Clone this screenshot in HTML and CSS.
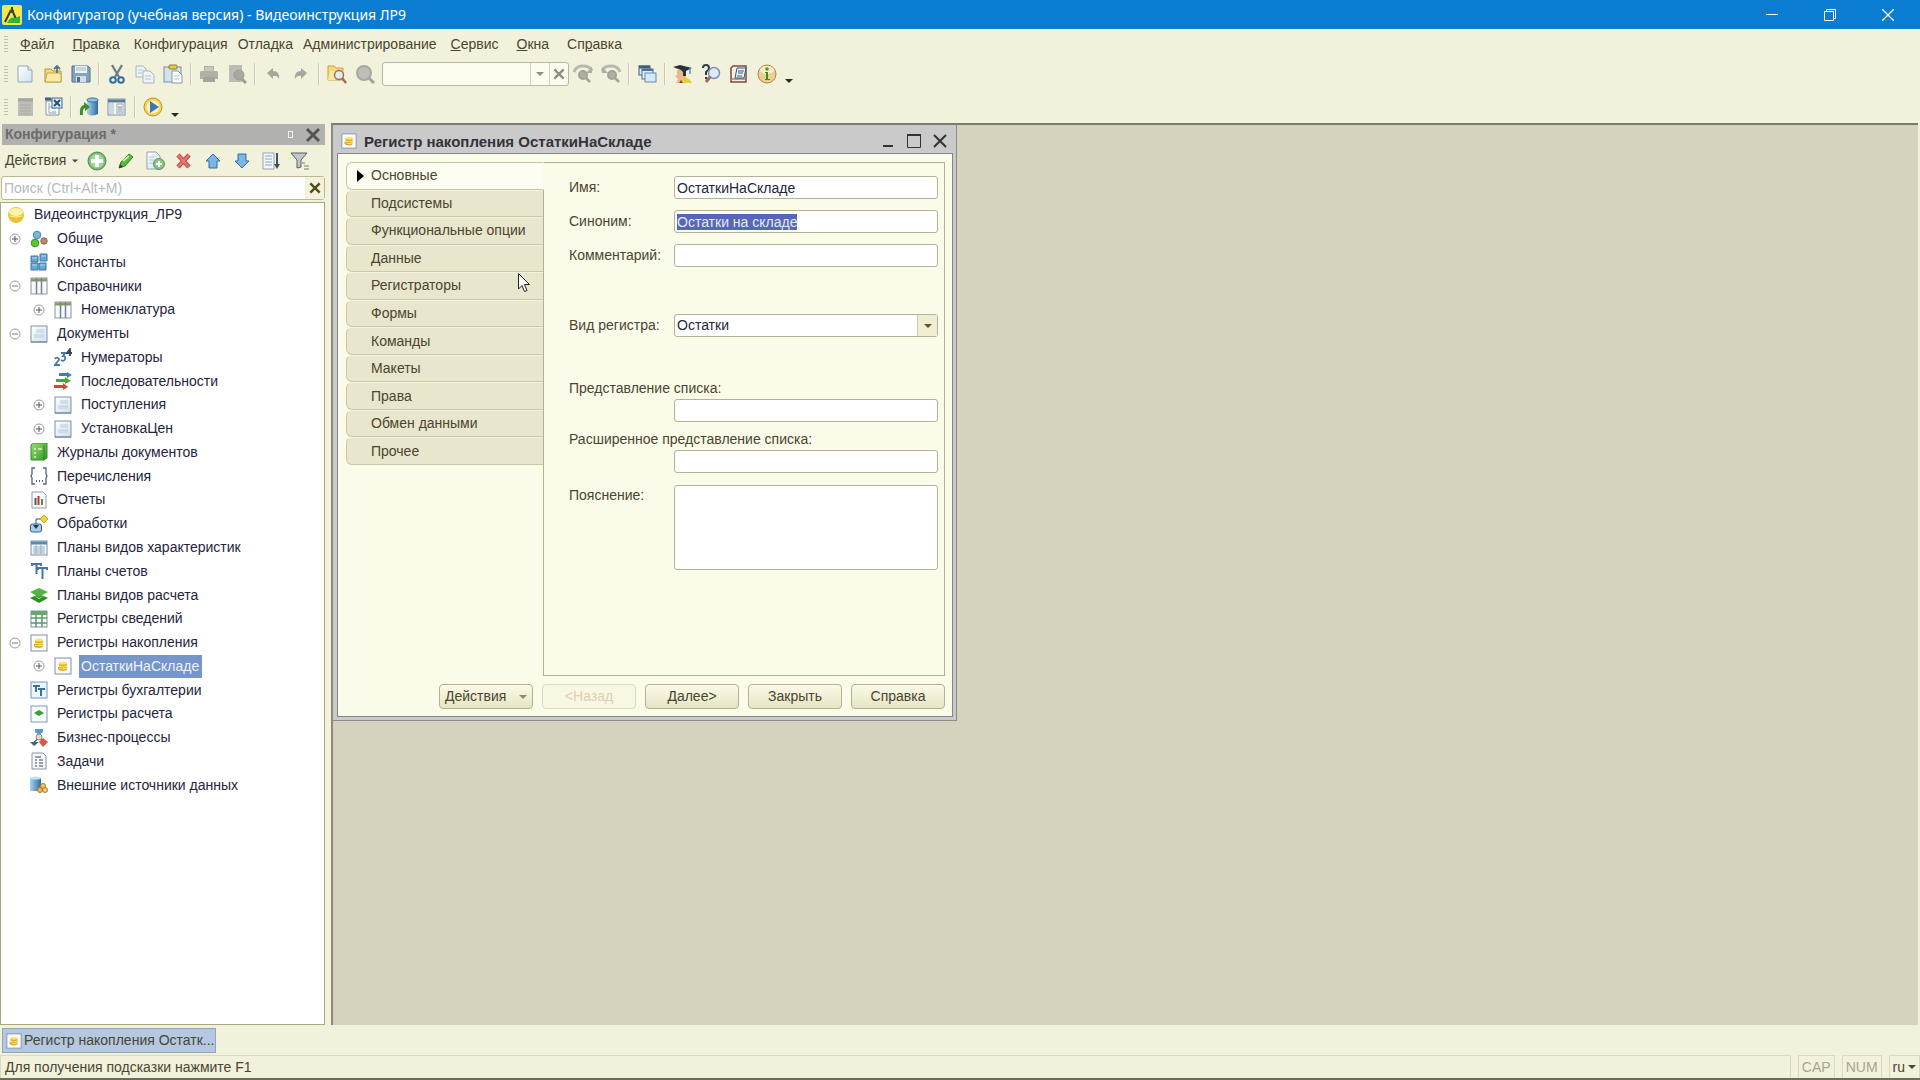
FILE: index.html
```html
<!DOCTYPE html>
<html lang="ru">
<head>
<meta charset="utf-8">
<title>Конфигуратор (учебная версия) - Видеоинструкция ЛР9</title>
<link rel="stylesheet" href="styles.css">
</head>
<body>
<svg class="sprite" aria-hidden="true">
  <defs>
    <linearGradient id="gold" x1="0" y1="0" x2="0" y2="1"><stop offset="0" stop-color="#fff2a0"/><stop offset="1" stop-color="#d9a818"/></linearGradient>
    <linearGradient id="paper" x1="0" y1="0" x2="1" y2="1"><stop offset="0" stop-color="#ffffff"/><stop offset="1" stop-color="#cfe0ee"/></linearGradient>
    <linearGradient id="blue" x1="0" y1="0" x2="1" y2="0"><stop offset="0" stop-color="#a9d3ee"/><stop offset="1" stop-color="#2f6ca3"/></linearGradient>
    <linearGradient id="green" x1="0" y1="0" x2="1" y2="1"><stop offset="0" stop-color="#9be06e"/><stop offset="1" stop-color="#2f9a2c"/></linearGradient>
  </defs>
  <symbol id="i-app" viewBox="0 0 20 20"><rect x="0" y="0" width="20" height="20" rx="2" fill="#f1e84f"/><path d="M10 2v4M9 5L3 17M10 5l4 9" stroke="#3d3b20" stroke-width="2" fill="none"/><circle cx="10" cy="6" r="2" fill="#4a4830"/><path d="M5 18q4-7 8-5l5-2v7z" fill="#2fb53a"/></symbol>
  <symbol id="i-new" viewBox="0 0 20 20"><path d="M3 2h10l4 4v12H3z" fill="url(#paper)" stroke="#93a5b8"/><path d="M13 2v4h4" fill="#e8f0f6" stroke="#93a5b8"/></symbol>
  <symbol id="i-open" viewBox="0 0 20 20"><path d="M2 5h6l2 2h8v11H2z" fill="#f3d97c" stroke="#b8953a"/><path d="M2 18l2-9h14v9z" fill="#faeaa6" stroke="#c8a64c"/><path d="M14 9V3m-3 2l3-3 3 3" fill="none" stroke="#5b7286" stroke-width="1.800"/></symbol>
  <symbol id="i-save" viewBox="0 0 20 20"><path d="M1 2h16l2 2v14H1z" fill="#86a2bd" stroke="#4f6e8c"/><rect x="4" y="2" width="12" height="7" fill="#e9f2f8"/><path d="M5 4h10M5 6h10" stroke="#9fb6c9"/><rect x="5" y="12" width="10" height="6" fill="#d3dde5"/><rect x="6" y="13" width="3" height="5" fill="#4f6e8c"/></symbol>
  <symbol id="i-cut" viewBox="0 0 20 20"><path d="M5 1l7 12M15 1L8 13" stroke="#6c7f90" stroke-width="2.400"/><circle cx="6" cy="16" r="2.800" fill="none" stroke="#2f6da0" stroke-width="2"/><circle cx="14" cy="16" r="2.800" fill="none" stroke="#2f6da0" stroke-width="2"/></symbol>
  <symbol id="i-copy" viewBox="0 0 20 20"><path d="M1 2h7l3 3v8H1z" fill="#eef3f6" stroke="#a5b7c6"/><path d="M8 7h7l4 4v8H8z" fill="#eef3f6" stroke="#a5b7c6"/><path d="M3 6h5M3 9h4M10 12h6M10 15h6" stroke="#b4c4d2"/></symbol>
  <symbol id="i-paste" viewBox="0 0 20 20"><rect x="1" y="3" width="17" height="15" fill="#d7e1e8" stroke="#7890a5"/><rect x="6" y="1" width="8" height="4" rx="1" fill="#e8c94e" stroke="#937b26"/><path d="M9 7h6l4 4v8H9z" fill="#fff" stroke="#8199ad"/><path d="M11 12h5M11 15h5" stroke="#b5c4d0"/></symbol>
  <symbol id="i-print" viewBox="0 0 20 20"><path d="M5 2h10v5h3q1 1 1 2v6H1V9q0-2 1-2h3z" fill="#b1b0a6"/><path d="M6 3h8v4H6z" fill="#c9c8bd"/><path d="M4 13h12v5H4z" fill="#a5a49b"/></symbol>
  <symbol id="i-preview" viewBox="0 0 20 20"><path d="M2 1h13v17H2z" fill="#bdbcb2"/><circle cx="12" cy="11" r="5" fill="#aaa99f" stroke="#9d9c92"/><path d="M15 15l4 4" stroke="#9d9c92" stroke-width="3"/></symbol>
  <symbol id="i-undo" viewBox="0 0 20 20"><path d="M4 9l6-5v3q7 0 6 8-2-4-6-3v3z" fill="#a5a79c"/></symbol>
  <symbol id="i-redo" viewBox="0 0 20 20"><path d="M16 9l-6-5v3q-7 0-6 8 2-4 6-3v3z" fill="#a5a79c"/></symbol>
  <symbol id="i-find" viewBox="0 0 20 20"><path d="M1 2h6l2 2h7v12H1z" fill="#f4d977" stroke="#c6a349"/><path d="M1 16L3 7h14v9z" fill="#f9e8a2"/><circle cx="12" cy="11" r="4.500" fill="#e3edf3" stroke="#a46e52" stroke-width="1.500"/><path d="M15 14l4 5" stroke="#a46e52" stroke-width="2.500"/></symbol>
  <symbol id="i-lens" viewBox="0 0 20 20"><circle cx="9" cy="9" r="7" fill="#c0bfb6" stroke="#a9a89f" stroke-width="2"/><path d="M14 14l5 5" stroke="#a3a298" stroke-width="3"/></symbol>
  <symbol id="i-lensup" viewBox="0 0 20 20"><path d="M1 8q2-6 9-6t9 5" fill="none" stroke="#bab9af" stroke-width="3"/><path d="M19 3v6h-6z" fill="#aeada3"/><circle cx="10" cy="11" r="4" fill="#b0afa5" stroke="#a3a299" stroke-width="2"/><path d="M13 14l4 4" stroke="#a3a299" stroke-width="2.500"/></symbol>
  <symbol id="i-lensdn" viewBox="0 0 20 20"><path d="M1 7q2-5 9-5t9 6" fill="none" stroke="#bab9af" stroke-width="3"/><path d="M1 3v6h6z" fill="#aeada3"/><circle cx="11" cy="11" r="4" fill="#b0afa5" stroke="#a3a299" stroke-width="2"/><path d="M14 14l4 4" stroke="#a3a299" stroke-width="2.500"/></symbol>
  <symbol id="i-windows" viewBox="0 0 20 20"><rect x="2" y="2" width="11" height="9" fill="#dceaf4" stroke="#3d5f7e"/><path d="M2 3h11" stroke="#3d5f7e" stroke-width="3"/><rect x="5" y="5" width="11" height="10" fill="#e3eef7" stroke="#4d7191"/><path d="M5 6h11" stroke="#4d7191" stroke-width="2"/><rect x="8" y="9" width="11" height="9" fill="#d7e8f7" stroke="#5f8db5"/></symbol>
  <symbol id="i-student" viewBox="0 0 20 20"><path d="M3 19l2-4-3-3 2-1V6h9v7l6 6z" fill="#e8b98c"/><path d="M11 13l-2 6h10l-3-4z" fill="#e0d32c"/><path d="M0 3l7-2 12 3-6 3v5h-3V8L8 6z" fill="#24323e"/><path d="M17 4v6" stroke="#4a90c2" stroke-width="1.500"/><path d="M8 16l2 3H6z" fill="#a53a26"/></symbol>
  <symbol id="i-qlens" viewBox="0 0 20 20"><path d="M2 4q0-3 3-3t3 3q0 2-3 4v3" fill="none" stroke="#2c3d4c" stroke-width="2"/><rect x="4" y="13" width="2" height="2" fill="#2c3d4c"/><circle cx="13" cy="9" r="5.500" fill="#dfe9fa" stroke="#8290ac" stroke-width="1.500"/><path d="M9 13l-4 5" stroke="#9b6a55" stroke-width="3"/></symbol>
  <symbol id="i-syntax" viewBox="0 0 20 20"><path d="M4 2h13v16H2V4z" fill="#f4efe7" stroke="#7c4c3e" stroke-width="1.500"/><path d="M3 15h13" stroke="#7c4c3e"/><path d="M8 4h9l-2 10H6z" fill="#e9f0f8" stroke="#3c5976"/><path d="M9 7h6M9 9h5M8 12h5" stroke="#3c5976"/></symbol>
  <symbol id="i-info" viewBox="0 0 20 20"><circle cx="10" cy="10" r="9" fill="#edcf93" stroke="#ad8644"/><ellipse cx="10" cy="6" rx="7" ry="4" fill="#f9edd0"/><circle cx="10" cy="5" r="1.800" fill="#549c24"/><path d="M8 8h3v7h2v1H8v-1h1V9H8z" fill="#3e8d17"/></symbol>
  <symbol id="i-conf" viewBox="0 0 20 20"><rect x="3" y="1" width="15" height="18" fill="#bfbfb8"/><path d="M3 3h15" stroke="#a6a69f" stroke-width="3"/><path d="M5 8h11M5 11h11M5 14h11M5 17h11" stroke="#aaaaa3"/></symbol>
  <symbol id="i-confx" viewBox="0 0 20 20"><path d="M2 2h7v2H3v14h13v-7" fill="#fbfbf5" stroke="#7f98ac"/><path d="M2 2h6" stroke="#3f5f7f" stroke-width="3"/><path d="M6 6v10h3M6 10h3" fill="none" stroke="#8fa4b6"/><rect x="9" y="9" width="4" height="3" fill="#b6c9d8"/><rect x="9" y="14" width="4" height="3" fill="#b6c9d8"/><rect x="9" y="1" width="10" height="10" fill="#dfeefa" stroke="#396c9c"/><path d="M11 3l6 6M17 3l-6 6" stroke="#2f4d68" stroke-width="2"/></symbol>
  <symbol id="i-db" viewBox="0 0 20 20"><path d="M8 3v14q5 3 11 0V3z" fill="url(#blue)"/><ellipse cx="13.500" cy="3" rx="5.500" ry="2" fill="#8cc1e4" stroke="#396f9c"/><path d="M1 18q-1-9 4-10V5l6 5-5 4v-3q-3 1-2 7z" fill="#398e2b"/></symbol>
  <symbol id="i-list" viewBox="0 0 20 20"><rect x="1" y="2" width="17" height="16" fill="#f3f5f6" stroke="#7f93a5"/><path d="M1 4h17" stroke="#5c7c98" stroke-width="3"/><rect x="2" y="6" width="5" height="11" fill="#cdd8e0"/><rect x="10" y="7" width="6" height="9" fill="#fff" stroke="#98a5b0"/><path d="M11 10h4M11 12h4M11 14h4" stroke="#7b8791"/></symbol>
  <symbol id="i-run" viewBox="0 0 20 20"><circle cx="10" cy="10" r="9" fill="#f7d352" stroke="#be932b"/><circle cx="10" cy="10" r="6.500" fill="#f9f0c8"/><path d="M7 4l9 6-9 6z" fill="#3c79ac"/></symbol>

  <symbol id="i-add" viewBox="0 0 20 20"><circle cx="10" cy="10" r="9" fill="#7cb779" stroke="#4e8f50"/><circle cx="10" cy="10" r="7" fill="#a6d5a0"/><path d="M10 4v12M4 10h12" stroke="#fff" stroke-width="3.500"/></symbol>
  <symbol id="i-pen" viewBox="0 0 20 20"><path d="M3 17l2-6 8-8 4 3-8 9z" fill="#56b93a" stroke="#2e8424"/><path d="M7 10l6-5" stroke="#c5efa5" stroke-width="2"/><path d="M3 17l1-4 3 3z" fill="#3d3d2d"/></symbol>
  <symbol id="i-adddoc" viewBox="0 0 20 20"><path d="M2 1h9l4 4v13H2z" fill="url(#paper)" stroke="#8da5b9"/><path d="M4 6h6M4 9h7M4 12h5" stroke="#b4c6d4"/><circle cx="14" cy="13" r="5.500" fill="#8cc486" stroke="#569858"/><path d="M14 10v6M11 13h6" stroke="#fff" stroke-width="2"/></symbol>
  <symbol id="i-del" viewBox="0 0 20 20"><path d="M4 4l11 12M15 4L4 16" stroke="#c24a48" stroke-width="4.500"/><path d="M4 4l11 12M15 4L4 16" stroke="#e8756c" stroke-width="2.500"/></symbol>
  <symbol id="i-up" viewBox="0 0 20 20"><path d="M10 3l7 7h-3v7H6v-7H3z" fill="#79b6e8" stroke="#356d9c"/></symbol>
  <symbol id="i-down" viewBox="0 0 20 20"><path d="M10 17l7-7h-3V3H6v7H3z" fill="#79b6e8" stroke="#356d9c"/></symbol>
  <symbol id="i-sort" viewBox="0 0 20 20"><rect x="2" y="2" width="11" height="16" fill="#f4f8fa" stroke="#90a6b8"/><path d="M4 5h7M4 8h7M4 11h7M4 14h7" stroke="#8ea5b8"/><path d="M16 2v13" stroke="#42505c" stroke-width="2"/><path d="M13 13h6l-3 5z" fill="#42505c"/></symbol>
  <symbol id="i-filter" viewBox="0 0 20 20"><path d="M1 2h16l-6 7v7l-4 1V9z" fill="#c2c6c8" stroke="#5a6064"/><path d="M12 12h3M14 15h5M14 18h5" stroke="#777c70"/></symbol>

  <symbol id="i-plus" viewBox="0 0 12 12"><circle cx="6" cy="6" r="5" fill="#fff" stroke="#9c9c9c"/><path d="M6 3v6M3 6h6" stroke="#555"/></symbol>
  <symbol id="i-minus" viewBox="0 0 12 12"><circle cx="6" cy="6" r="5" fill="#fff" stroke="#9c9c9c"/><path d="M3 6h6" stroke="#777"/></symbol>

  <symbol id="t-root" viewBox="0 0 18 18"><circle cx="9" cy="9" r="8" fill="#ebc435"/><ellipse cx="9" cy="6" rx="7" ry="4" fill="#fbf2a6"/><path d="M3 10q6 2 12 0" stroke="#fff5b0" fill="none"/></symbol>
  <symbol id="t-common" viewBox="0 0 18 18"><circle cx="7" cy="5" r="3.800" fill="#7fb5dc" stroke="#4d84ac"/><circle cx="5" cy="13" r="3.800" fill="#53c934" stroke="#379021"/><circle cx="14" cy="11" r="3.200" fill="#b98a70" stroke="#8b6450"/></symbol>
  <symbol id="t-const" viewBox="0 0 18 18"><path d="M1 3h7v6H1zM1 10h7v7H1zM9 10h7v7H9zM10 1h7v7h-7z" fill="#6aa5d0" stroke="#3b76a5"/><path d="M2 5h5M2 12h5M10 12h5M11 3h5" stroke="#b4dbf2"/></symbol>
  <symbol id="t-cat" viewBox="0 0 18 18"><rect x="1" y="1" width="16" height="16" fill="#f7f9fb" stroke="#8895a8"/><path d="M1 3h16" stroke="#8d9a62" stroke-width="3"/><path d="M6.500 1v16M11.500 1v16" stroke="#75839a" stroke-width="1.500"/></symbol>
  <symbol id="t-doc" viewBox="0 0 18 18"><rect x="1" y="1" width="16" height="16" fill="url(#paper)" stroke="#7c96ae"/><path d="M6 5h8M6 7h8M4 10h10M4 12h10" stroke="#bccbd8"/><path d="M1 17h16" stroke="#64809c"/></symbol>
  <symbol id="t-num" viewBox="0 0 18 18"><g fill="none" stroke="#4a779f" stroke-width="1.800"><path d="M1 11q1-2 3-1t0 3l-3 4h5"/><path d="M7 5h4l-2 3q3 0 2 3t-4 1"/><path d="M16 8V1l-3 4h5" stroke="#31465f"/></g></symbol>
  <symbol id="t-seq" viewBox="0 0 18 18"><path d="M5 1h8V0l5 3-5 3V4H5z" fill="#3f7fb0"/><path d="M2 7h9V5l6 4-6 3v-2H2z" fill="#48a930"/><path d="M0 13h9v-2l5 4-5 3v-2H0z" fill="#df432f"/></symbol>
  <symbol id="t-journal" viewBox="0 0 18 18"><path d="M1 2l3-2h13v15l-3 2H1z" fill="url(#green)" stroke="#348b2c"/><path d="M14 2v15" stroke="#2b7e25"/><path d="M4 6h2M4 10h2M4 14h2M8 6h4" stroke="#dff7c9" stroke-width="1.500"/></symbol>
  <symbol id="t-enum" viewBox="0 0 18 18"><path d="M5 1H2v6L1 9l1 2v6h3M13 1h3v6l1 2-1 2v6h-3" fill="none" stroke="#566371" stroke-width="1.300"/><path d="M6 14h1M9 14h1M12 14h1" stroke="#566371" stroke-width="2"/></symbol>
  <symbol id="t-report" viewBox="0 0 18 18"><path d="M2 1h11l3 3v13H2z" fill="#f8fafb" stroke="#8b9daf"/><path d="M5.500 7v7" stroke="#555d66" stroke-width="2"/><path d="M8.500 5v9" stroke="#cb3527" stroke-width="2"/><path d="M12 8v6" stroke="#51923c" stroke-width="2"/></symbol>
  <symbol id="t-proc" viewBox="0 0 18 18"><path d="M10 4l4-4 4 4-4 4z" fill="#f0d73c" stroke="#c3a51f"/><path d="M10 4H6v7" fill="none" stroke="#344e68"/><rect x="0.500" y="9" width="11" height="8" rx="2" fill="#a5cde9" stroke="#2d6291"/><path d="M3 10h6l-3 4z" fill="#26384b"/></symbol>
  <symbol id="t-char" viewBox="0 0 18 18"><rect x="1" y="2" width="16" height="14" fill="#f5f8fb" stroke="#7691aa"/><path d="M1 4h16" stroke="#5c89a8" stroke-width="3"/><path d="M3 8h12M3 10h12M3 12h12M3 14h12" stroke="#8fb2c6"/><path d="M6 6v9M11 6v9" stroke="#92aebf"/></symbol>
  <symbol id="t-acc" viewBox="0 0 18 18"><path d="M2 4V2h9v2M6.500 2v10M8 8V6h9v2M12.500 6v11" fill="none" stroke="#4478a5" stroke-width="2"/></symbol>
  <symbol id="t-calc" viewBox="0 0 18 18"><path d="M0 12l9-4 9 4-9 5z" fill="#2f8c29"/><path d="M0 6l9-4 9 4-9 5z" fill="#57b442"/><path d="M3 9l6 3 6-3-6 4z" fill="#d4efc4"/></symbol>
  <symbol id="t-info" viewBox="0 0 18 18"><rect x="1" y="1" width="16" height="16" fill="#fbfdfb" stroke="#7693a5"/><rect x="1" y="1" width="16" height="4" fill="#68a86e"/><path d="M6 5v12M12 5v12M1 8h16M1 13h16" stroke="#5f9474" stroke-width="1.500"/></symbol>
  <symbol id="t-accum" viewBox="0 0 18 18"><rect x="1" y="1" width="16" height="16" fill="#fcfcfa" stroke="#7e90b0"/><path d="M5 6v7q4 2 8 0V6z" fill="#e2b01f"/><path d="M4 10v2q3 2 5 1v-3z" fill="#d79f14"/><ellipse cx="9" cy="6" rx="4" ry="1.600" fill="#fbe66a"/><path d="M5 9q4 2 8 0M5 11q4 2 8 0" stroke="#fbe88a" fill="none"/></symbol>
  <symbol id="t-book" viewBox="0 0 18 18"><rect x="1" y="1" width="16" height="16" fill="#eef6fb" stroke="#6d9abd"/><path d="M3 5h7M6 4v7M8 8h7M11 8v7" fill="none" stroke="#3e7198" stroke-width="2"/></symbol>
  <symbol id="t-rcalc" viewBox="0 0 18 18"><rect x="1" y="1" width="16" height="16" fill="#f8fbfd" stroke="#7c9bb6"/><path d="M4 8l5-3 5 3-5 3z" fill="#3d9b33"/></symbol>
  <symbol id="t-bp" viewBox="0 0 18 18"><path d="M5 0h8v3l-4 3-4-3z" fill="#559ac8"/><path d="M9 6v4M4 13l5-4 5 4" fill="none" stroke="#5b6670" stroke-width="1.500"/><circle cx="9" cy="8" r="3" fill="#e9d9bc" stroke="#8a8b86"/><path d="M0 13h9l-5 4z" fill="#3a6877"/><path d="M9 13l4-4 5 4-5 5z" fill="#de5445"/></symbol>
  <symbol id="t-task" viewBox="0 0 18 18"><path d="M2 1h11l3 3v13H2z" fill="#f7f8f9" stroke="#8495a5"/><path d="M5 5h6M5 8h2M9 8h4M5 11h2M9 11h4M5 14h2M9 14h4" stroke="#76828e" stroke-width="1.500"/></symbol>
  <symbol id="t-ext" viewBox="0 0 18 18"><path d="M0 2h11v13H0z" fill="url(#blue)"/><ellipse cx="5.500" cy="2" rx="5.500" ry="1.500" fill="#c2e0f2"/><circle cx="13" cy="10" r="2.500" fill="#efc46a" stroke="#af7d22"/><circle cx="10" cy="14" r="2.500" fill="#efb64a" stroke="#af7d22"/><circle cx="15" cy="14" r="2.500" fill="#f3cd79" stroke="#af7d22"/></symbol>
  <symbol id="i-arrow" viewBox="0 0 8 4"><path d="M0 0h8L4 4z" fill="currentColor"/></symbol>
  <symbol id="i-x" viewBox="0 0 12 12"><path d="M2 2l8 8M10 2l-8 8" stroke="currentColor" stroke-width="2"/></symbol>
</svg>

<div class="app">
  <header class="titlebar">
    <svg class="ico20"><use href="#i-app"/></svg>
    <h1 class="titlebar-text">Конфигуратор (учебная версия) - Видеоинструкция ЛР9</h1>
    <button class="sysbtn" aria-label="Свернуть"><svg class="ico12" viewBox="0 0 12 12"><path d="M0 5.500h12" stroke="#fff"/></svg></button>
    <button class="sysbtn" aria-label="Восстановить"><svg class="ico12" viewBox="0 0 12 12"><path d="M.5 2.500h9v9h-9zM2.500 2.500v-2h9v9h-2" fill="none" stroke="#fff"/></svg></button>
    <button class="sysbtn" aria-label="Закрыть"><svg class="ico12" viewBox="0 0 12 12"><path d="M0 0l12 12M12 0L0 12" stroke="#fff" stroke-width="1.300"/></svg></button>
  </header>

  <nav class="menubar">
    <span class="grip"></span>
    <button class="menu"><u>Ф</u>айл</button>
    <button class="menu"><u>П</u>равка</button>
    <button class="menu tight">Конфигурация</button>
    <button class="menu tight">Отладка</button>
    <button class="menu tight">Администрирование</button>
    <button class="menu"><u>С</u>ервис</button>
    <button class="menu"><u>О</u>кна</button>
    <button class="menu">Сп<u>р</u>авка</button>
  </nav>

  <div class="toolbar">
    <span class="grip"></span>
    <button class="tool" aria-label="Создать"><svg class="ico20"><use href="#i-new"/></svg></button>
    <button class="tool" aria-label="Открыть"><svg class="ico20"><use href="#i-open"/></svg></button>
    <button class="tool" aria-label="Сохранить"><svg class="ico20"><use href="#i-save"/></svg></button>
    <span class="sep"></span>
    <button class="tool" aria-label="Вырезать"><svg class="ico20"><use href="#i-cut"/></svg></button>
    <button class="tool" aria-label="Копировать"><svg class="ico20"><use href="#i-copy"/></svg></button>
    <button class="tool" aria-label="Вставить"><svg class="ico20"><use href="#i-paste"/></svg></button>
    <span class="sep"></span>
    <button class="tool" aria-label="Печать"><svg class="ico20"><use href="#i-print"/></svg></button>
    <button class="tool" aria-label="Просмотр"><svg class="ico20"><use href="#i-preview"/></svg></button>
    <span class="sep"></span>
    <button class="tool" aria-label="Отменить"><svg class="ico20"><use href="#i-undo"/></svg></button>
    <button class="tool" aria-label="Вернуть"><svg class="ico20"><use href="#i-redo"/></svg></button>
    <span class="sep"></span>
    <button class="tool" aria-label="Глобальный поиск"><svg class="ico20"><use href="#i-find"/></svg></button>
    <button class="tool" aria-label="Найти"><svg class="ico20"><use href="#i-lens"/></svg></button>
    <div class="findbox">
      <input class="findbox-input" type="text" aria-label="Строка поиска">
      <button class="findbox-btn" aria-label="Список"><svg class="caret"><use href="#i-arrow"/></svg></button>
      <button class="findbox-btn" aria-label="Очистить"><svg class="ico14"><use href="#i-x"/></svg></button>
    </div>
    <button class="tool" aria-label="Найти далее"><svg class="ico20"><use href="#i-lensup"/></svg></button>
    <button class="tool" aria-label="Найти ранее"><svg class="ico20"><use href="#i-lensdn"/></svg></button>
    <span class="sep"></span>
    <button class="tool" aria-label="Окна"><svg class="ico20"><use href="#i-windows"/></svg></button>
    <span class="sep"></span>
    <button class="tool" aria-label="Обучение"><svg class="ico20"><use href="#i-student"/></svg></button>
    <button class="tool" aria-label="Поиск в справке"><svg class="ico20"><use href="#i-qlens"/></svg></button>
    <button class="tool" aria-label="Синтакс-помощник"><svg class="ico20"><use href="#i-syntax"/></svg></button>
    <button class="tool" aria-label="О программе"><svg class="ico20"><use href="#i-info"/></svg></button>
    <button class="more" aria-label="Ещё"><svg class="caret"><use href="#i-arrow"/></svg></button>
  </div>

  <div class="toolbar toolbar-low">
    <span class="grip"></span>
    <button class="tool" aria-label="Открыть конфигурацию"><svg class="ico20"><use href="#i-conf"/></svg></button>
    <button class="tool" aria-label="Закрыть конфигурацию"><svg class="ico20"><use href="#i-confx"/></svg></button>
    <span class="sep"></span>
    <button class="tool" aria-label="Обновить базу данных"><svg class="ico20"><use href="#i-db"/></svg></button>
    <button class="tool" aria-label="Окно конфигурации"><svg class="ico20"><use href="#i-list"/></svg></button>
    <span class="sep"></span>
    <button class="tool" aria-label="Начать отладку"><svg class="ico20"><use href="#i-run"/></svg></button>
    <button class="more" aria-label="Ещё"><svg class="caret"><use href="#i-arrow"/></svg></button>
  </div>

  <main class="work">
    <aside class="side">
      <div class="side-head">
        <h2 class="side-title">Конфигурация *</h2>
        <button class="pin" aria-label="Закрепить"><span class="pin-mark"></span></button>
        <button class="side-close" aria-label="Закрыть панель"><svg class="ico18"><use href="#i-x"/></svg></button>
      </div>
      <div class="side-tools">
        <button class="actions">Действия <svg class="caret"><use href="#i-arrow"/></svg></button>
        <button class="tool" aria-label="Добавить"><svg class="ico20"><use href="#i-add"/></svg></button>
        <button class="tool" aria-label="Изменить"><svg class="ico20"><use href="#i-pen"/></svg></button>
        <button class="tool" aria-label="Скопировать"><svg class="ico20"><use href="#i-adddoc"/></svg></button>
        <button class="tool" aria-label="Удалить"><svg class="ico20"><use href="#i-del"/></svg></button>
        <button class="tool" aria-label="Вверх"><svg class="ico20"><use href="#i-up"/></svg></button>
        <button class="tool" aria-label="Вниз"><svg class="ico20"><use href="#i-down"/></svg></button>
        <button class="tool" aria-label="Упорядочить"><svg class="ico20"><use href="#i-sort"/></svg></button>
        <button class="tool" aria-label="Отбор"><svg class="ico20"><use href="#i-filter"/></svg></button>
      </div>
      <div class="search">
        <input class="search-input" type="text" placeholder="Поиск (Ctrl+Alt+M)" aria-label="Поиск">
        <button class="search-clear" aria-label="Очистить поиск"><svg class="ico14"><use href="#i-x"/></svg></button>
      </div>
      <div class="treebox">
        <ul class="tree" role="tree">
          <li class="node root" role="treeitem"><svg class="ico18"><use href="#t-root"/></svg><span class="label">Видеоинструкция_ЛР9</span></li>
          <li class="node" role="treeitem"><svg class="exp"><use href="#i-plus"/></svg><svg class="ico18"><use href="#t-common"/></svg><span class="label">Общие</span></li>
          <li class="node" role="treeitem"><span class="exp"></span><svg class="ico18"><use href="#t-const"/></svg><span class="label">Константы</span></li>
          <li class="node" role="treeitem"><svg class="exp"><use href="#i-minus"/></svg><svg class="ico18"><use href="#t-cat"/></svg><span class="label">Справочники</span></li>
          <li class="node sub" role="treeitem"><svg class="exp"><use href="#i-plus"/></svg><svg class="ico18"><use href="#t-cat"/></svg><span class="label">Номенклатура</span></li>
          <li class="node" role="treeitem"><svg class="exp"><use href="#i-minus"/></svg><svg class="ico18"><use href="#t-doc"/></svg><span class="label">Документы</span></li>
          <li class="node sub" role="treeitem"><span class="exp"></span><svg class="ico18"><use href="#t-num"/></svg><span class="label">Нумераторы</span></li>
          <li class="node sub" role="treeitem"><span class="exp"></span><svg class="ico18"><use href="#t-seq"/></svg><span class="label">Последовательности</span></li>
          <li class="node sub" role="treeitem"><svg class="exp"><use href="#i-plus"/></svg><svg class="ico18"><use href="#t-doc"/></svg><span class="label">Поступления</span></li>
          <li class="node sub" role="treeitem"><svg class="exp"><use href="#i-plus"/></svg><svg class="ico18"><use href="#t-doc"/></svg><span class="label">УстановкаЦен</span></li>
          <li class="node" role="treeitem"><span class="exp"></span><svg class="ico18"><use href="#t-journal"/></svg><span class="label">Журналы документов</span></li>
          <li class="node" role="treeitem"><span class="exp"></span><svg class="ico18"><use href="#t-enum"/></svg><span class="label">Перечисления</span></li>
          <li class="node" role="treeitem"><span class="exp"></span><svg class="ico18"><use href="#t-report"/></svg><span class="label">Отчеты</span></li>
          <li class="node" role="treeitem"><span class="exp"></span><svg class="ico18"><use href="#t-proc"/></svg><span class="label">Обработки</span></li>
          <li class="node" role="treeitem"><span class="exp"></span><svg class="ico18"><use href="#t-char"/></svg><span class="label">Планы видов характеристик</span></li>
          <li class="node" role="treeitem"><span class="exp"></span><svg class="ico18"><use href="#t-acc"/></svg><span class="label">Планы счетов</span></li>
          <li class="node" role="treeitem"><span class="exp"></span><svg class="ico18"><use href="#t-calc"/></svg><span class="label">Планы видов расчета</span></li>
          <li class="node" role="treeitem"><span class="exp"></span><svg class="ico18"><use href="#t-info"/></svg><span class="label">Регистры сведений</span></li>
          <li class="node" role="treeitem"><svg class="exp"><use href="#i-minus"/></svg><svg class="ico18"><use href="#t-accum"/></svg><span class="label">Регистры накопления</span></li>
          <li class="node sub" role="treeitem" aria-selected="true"><svg class="exp"><use href="#i-plus"/></svg><svg class="ico18"><use href="#t-accum"/></svg><span class="label selected">ОстаткиНаСкладе</span></li>
          <li class="node" role="treeitem"><span class="exp"></span><svg class="ico18"><use href="#t-book"/></svg><span class="label">Регистры бухгалтерии</span></li>
          <li class="node" role="treeitem"><span class="exp"></span><svg class="ico18"><use href="#t-rcalc"/></svg><span class="label">Регистры расчета</span></li>
          <li class="node" role="treeitem"><span class="exp"></span><svg class="ico18"><use href="#t-bp"/></svg><span class="label">Бизнес-процессы</span></li>
          <li class="node" role="treeitem"><span class="exp"></span><svg class="ico18"><use href="#t-task"/></svg><span class="label">Задачи</span></li>
          <li class="node" role="treeitem"><span class="exp"></span><svg class="ico18"><use href="#t-ext"/></svg><span class="label">Внешние источники данных</span></li>
        </ul>
      </div>
    </aside>

    <section class="mdi">
      <section class="win">
        <header class="win-head">
          <svg class="ico16"><use href="#t-accum"/></svg>
          <h2 class="win-title">Регистр накопления ОстаткиНаСкладе</h2>
          <button class="winbtn" aria-label="Свернуть окно"><svg class="ico14" viewBox="0 0 14 14"><path d="M2 12h10" stroke="#333" stroke-width="2"/></svg></button>
          <button class="winbtn" aria-label="Развернуть окно"><svg class="ico14" viewBox="0 0 14 14"><path d="M.5 1v12.500h13V1" fill="none" stroke="#333"/><path d="M0 1h14" stroke="#333" stroke-width="2"/></svg></button>
          <button class="winbtn" aria-label="Закрыть окно"><svg class="ico14" viewBox="0 0 14 14"><path d="M1 1l12 12M13 1L1 13" stroke="#333" stroke-width="2"/></svg></button>
        </header>
        <div class="client">
          <div class="pages">
            <nav class="tabs">
              <button class="tab active"><svg class="tab-mark" viewBox="0 0 7 12"><path d="M0 0l7 6-7 6z"/></svg>Основные</button>
              <button class="tab">Подсистемы</button>
              <button class="tab">Функциональные опции</button>
              <button class="tab">Данные</button>
              <button class="tab">Регистраторы</button>
              <button class="tab">Формы</button>
              <button class="tab">Команды</button>
              <button class="tab">Макеты</button>
              <button class="tab">Права</button>
              <button class="tab">Обмен данными</button>
              <button class="tab">Прочее</button>
            </nav>
            <form class="panel">
              <div class="group">
                <div class="row"><label for="name">Имя:</label><input class="field" id="name" type="text" value="ОстаткиНаСкладе"></div>
                <div class="row"><label for="syn">Синоним:</label><input class="field" id="syn" type="text" value="Остатки на складе"></div>
                <div class="row"><label for="comment">Комментарий:</label><input class="field" id="comment" type="text"></div>
              </div>
              <div class="row"><label for="kind">Вид регистра:</label>
                <div class="selectbox"><select class="field select" id="kind"><option>Остатки</option><option>Обороты</option></select><span class="select-btn"><svg class="caret"><use href="#i-arrow"/></svg></span></div>
              </div>
              <div class="stack">
                <label for="lst">Представление списка:</label><input class="field indent" id="lst" type="text">
                <label class="second" for="ext">Расширенное представление списка:</label><input class="field indent" id="ext" type="text">
              </div>
              <div class="row top"><label for="note">Пояснение:</label><textarea class="field area" id="note"></textarea></div>
            </form>
          </div>
          <footer class="buttons">
            <button class="btn btn-menu">Действия <svg class="caret"><use href="#i-arrow"/></svg></button>
            <button class="btn" disabled>&lt;Назад</button>
            <button class="btn">Далее&gt;</button>
            <button class="btn">Закрыть</button>
            <button class="btn">Справка</button>
          </footer>
        </div>
        <svg class="cursor" viewBox="0 0 13 20"><path d="M.5.5v15.500l3.500-3.500 2.500 6 2.500-1-2.500-6h5z" fill="#fff" stroke="#222"/></svg>
      </section>
    </section>
  </main>

  <div class="tasks">
    <button class="task"><svg class="ico16"><use href="#t-accum"/></svg><span class="task-text">Регистр накопления Остатк...</span></button>
  </div>

  <footer class="status">
    <span class="status-main">Для получения подсказки нажмите F1</span>
    <span class="status-cell">CAP</span>
    <span class="status-cell">NUM</span>
    <button class="status-cell lang">ru <svg class="caret"><use href="#i-arrow"/></svg></button>
  </footer>
</div>
<script src="main.js"></script>
</body>
</html>
```
FILE: styles.css
```css
* { box-sizing: border-box; }

body {
  margin: 0;
  background: #f2f1dc;
  color: #4a4530;
  font: 14px/17px "Liberation Sans", Arial, sans-serif;
}

button, input, select, textarea {
  font: inherit;
  color: inherit;
}

button {
  padding: 0;
  border: 0;
  background: none;
}

h1, h2 { margin: 0; }
svg { flex: none; display: block; }

.sprite { position: absolute; width: 0; height: 0; }
.ico12 { width: 12px; height: 12px; }
.ico14 { width: 14px; height: 14px; }
.ico16 { width: 16px; height: 16px; }
.ico18 { width: 18px; height: 18px; }
.ico20 { width: 20px; height: 20px; }
.caret { width: 8px; height: 4px; }

.app {
  display: flex;
  flex-direction: column;
  min-height: 100vh;
  border-bottom: 2px solid #6c6b5c;
}

/* Title bar */
.titlebar {
  display: flex;
  align-items: center;
  height: 29px;
  padding: 0 3px 0 2px;
  background: #0a7dd3;
  color: #fff;
}
.titlebar-text {
  flex: 1;
  padding-left: 5px;
  font: 400 14px/20px "Noto Sans", "Open Sans", sans-serif;
}
.sysbtn {
  display: flex;
  justify-content: center;
  width: 58px;
}

/* Menu and toolbars */
.menubar, .toolbar {
  display: flex;
  align-items: center;
  height: 30px;
  padding-left: 4px;
}
.toolbar-low { height: 34px; padding-top: 1px; }
.grip {
  width: 4px;
  height: 16px;
  margin-right: 3px;
  background: repeating-linear-gradient(#c4c2ae 0 1px, transparent 1px 3px);
}
.menu { padding: 0 9px; }
.menu.tight { padding: 0 5px; }
.tool {
  display: flex;
  align-items: center;
  justify-content: center;
  width: 28px;
  height: 28px;
}
.sep {
  width: 2px;
  height: 22px;
  margin: 0 3px;
  border-left: 1px solid #c9c7b2;
  border-right: 1px solid #fbfbf0;
}
.more {
  align-self: flex-end;
  width: 16px;
  padding: 0 4px 6px;
  color: #2d2b1d;
}
.findbox {
  display: flex;
  width: 187px;
  height: 24px;
  margin-left: 3px;
  border: 1px solid #b9b7a4;
  border-radius: 3px;
  background: #fbfbee;
}
.findbox-input {
  flex: 1;
  min-width: 0;
  border: 0;
  background: none;
}
.findbox-btn {
  display: flex;
  align-items: center;
  justify-content: center;
  width: 19px;
  border-left: 1px solid #d5d3c2;
  color: #8f8d7f;
}

/* Work area */
.work {
  flex: 1;
  display: flex;
  gap: 6px;
  padding-right: 2px;
}
.side {
  display: flex;
  flex-direction: column;
  width: 325px;
  padding-top: 1px;
}
.side-head {
  display: flex;
  align-items: center;
  height: 21px;
  margin-left: 2px;
  padding-left: 3px;
  background: #b1b1b0;
  color: #6b6b69;
}
.side-title { flex: 1; font: 700 14px/17px "Liberation Sans", Arial, sans-serif; }
.pin { padding: 0 8px; }
.pin-mark {
  display: block;
  width: 5px;
  height: 7px;
  border: 1px solid #eee;
}
.side-close { padding: 0 3px; color: #555; }
.side-tools {
  display: flex;
  align-items: center;
  height: 31px;
  padding-left: 5px;
}
.side-tools .tool { width: 29px; }
.actions {
  display: flex;
  align-items: center;
  justify-content: space-between;
  width: 73px;
  margin-right: 4px;
}
.side-tools .caret { width: 6px; }
.search {
  display: flex;
  height: 24px;
  margin-left: 1px;
  border: 1px solid #bcb98f;
  border-radius: 3px;
  background: #fff;
}
.search-input {
  flex: 1;
  min-width: 0;
  padding: 0 2px;
  border: 0;
  background: none;
}
.search-input::placeholder { color: #b9b9b9; opacity: 1; }
.search-clear {
  display: flex;
  align-items: center;
  justify-content: center;
  width: 19px;
  background: #f4f2dc;
  color: #4f4a1c;
}
.treebox {
  flex: 1;
  margin-top: 2px;
  border: 1px solid #aaa77c;
  background: #fff;
}
.tree {
  display: grid;
  grid-auto-rows: 1fr;
  min-height: 594px;
  margin: 0;
  padding: 0;
  list-style: none;
  color: #25253c;
}
.node {
  display: flex;
  align-items: center;
  padding-left: 8px;
}
.node.sub { padding-left: 32px; }
.node.root { padding-left: 6px; }
.exp { width: 12px; height: 12px; margin-right: 9px; }
.label { padding: 0 2px 0 9px; }
.label.selected {
  margin-left: 7px;
  padding: 3px 3px 3px 2px;
  background: #7496cb;
  color: #eef3fb;
}

/* MDI client area */
.mdi {
  flex: 1;
  border-top: 2px solid #7d7b70;
  border-left: 2px solid #8c8a80;
  background: #d5d3be;
}
.win {
  position: relative;
  display: flex;
  flex-direction: column;
  width: 624px;
  min-height: 596px;
  padding: 0 3px 3px 4px;
  border: solid #8b8b8b;
  border-width: 0 1px 1px 0;
  background: #cbcacb;
}
.win-head {
  display: flex;
  align-items: center;
  height: 28px;
  padding: 4px 0 0 4px;
  color: #33333a;
}
.win-title {
  flex: 1;
  padding-left: 7px;
  font: 700 15px/17px "Liberation Sans", Arial, sans-serif;
}
.winbtn { padding: 0 6px; }
.client {
  flex: 1;
  display: flex;
  flex-direction: column;
  padding: 8px 7px 7px 8px;
  border: 1px solid #868686;
  background: #fbfbe9;
}
.pages { flex: 1; display: flex; }
.tabs {
  display: grid;
  grid-auto-rows: 1fr;
  align-self: flex-start;
  width: 198px;
  min-height: 303px;
  margin-right: -1px;
}
.tab {
  display: flex;
  align-items: center;
  padding-left: 24px;
  border: 1px solid #cbc8a6;
  border-top-color: #f3f2dc;
  border-radius: 6px 0 0 6px;
  background: #e8e6cc;
}
.tab.active {
  z-index: 1;
  gap: 7px;
  padding-left: 10px;
  border-color: #c9c6a0;
  border-right-color: #fbfbe9;
  background: #fdfdf2;
}
.tab-mark { width: 7px; height: 12px; }
.panel {
  flex: 1;
  display: flex;
  flex-direction: column;
  padding: 13px 6px 0 25px;
  border: 1px solid #b4b18a;
}
.group { display: flex; flex-direction: column; gap: 11px; margin-bottom: 47px; }
.row {
  display: grid;
  grid-template-columns: 105px 1fr;
  align-items: center;
}
.row.top { align-items: start; }
.row.top label { padding-top: 2px; }
.field {
  width: 100%;
  height: 23px;
  padding: 0 2px;
  border: 1px solid #b5b296;
  border-radius: 3px;
  outline: 0;
  background: #fff;
  color: #25253c;
}
.field::selection { background: #5566bb; color: #e6eaf8; }
.selectbox { display: grid; }
.select { grid-area: 1 / 1; appearance: none; }
.select-btn {
  grid-area: 1 / 1;
  display: flex;
  align-items: center;
  justify-content: center;
  justify-self: end;
  width: 20px;
  height: 21px;
  margin: 1px;
  border-left: 1px solid #c9c7a8;
  background: #efedd2;
  color: #5a5420;
  pointer-events: none;
}
.stack {
  display: flex;
  flex-direction: column;
  align-items: flex-start;
  margin: 43px 0 12px;
}
.stack .second { margin-top: 9px; }
.field.indent { width: auto; align-self: stretch; margin: 2px 0 0 105px; }
.area { height: 85px; resize: none; }
.buttons {
  display: flex;
  justify-content: flex-end;
  gap: 9px;
  padding-top: 8px;
}
.btn {
  width: 94px;
  height: 25px;
  border: 1px solid #b3b18e;
  border-radius: 4px;
  background: linear-gradient(#fbfae8, #e6e4c4);
}
.btn:disabled { border-color: #dcdabf; background: #f8f7e2; color: #dfcdb4; }
.btn-menu {
  display: flex;
  align-items: center;
  justify-content: space-between;
  padding: 0 5px;
}
.btn-menu .caret { color: #8d8a6d; }
.cursor {
  position: absolute;
  left: 185px;
  top: 148px;
  width: 13px;
  height: 20px;
}

/* Window list and status bar */
.tasks { padding: 3px 2px 2px; }
.task {
  display: flex;
  align-items: center;
  gap: 2px;
  width: 214px;
  height: 25px;
  padding: 0 3px;
  border: 1px solid #93a5bd;
  background: #b4c8e2;
}
.task-text { white-space: nowrap; }
.status {
  display: flex;
  gap: 7px;
  height: 23px;
}
.status-main, .status-cell {
  border: 1px solid #dbd9c2;
  border-bottom: 0;
  line-height: 23px;
}
.status-main { flex: 1; padding-left: 4px; }
.status-cell { padding: 0 3px; color: #aaa48c; }
.status-cell.lang {
  display: flex;
  align-items: center;
  gap: 3px;
  color: #4a4530;
}
```
FILE: main.js
```js
const synonym = document.getElementById("syn");
synonym.focus();
synonym.select();
```
